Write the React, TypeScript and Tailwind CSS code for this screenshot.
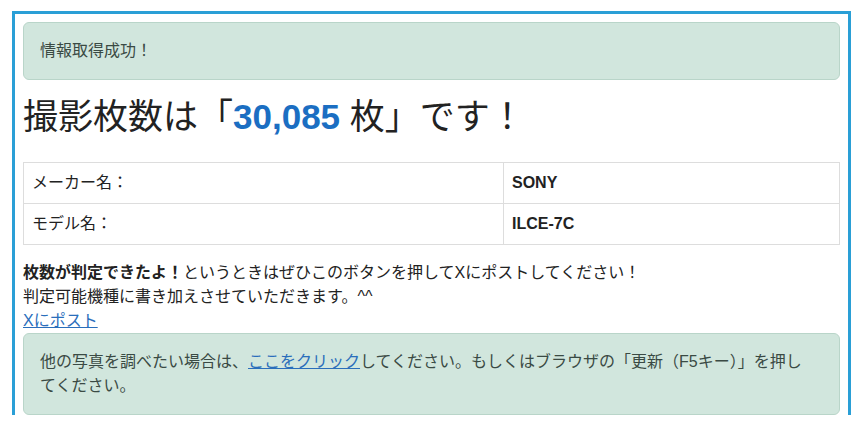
export default function App() {
  const font = 'font-["Liberation_Sans","Noto_Sans_CJK_JP",sans-serif]'

  return (
    <div className={`bg-white pt-[11px] pl-[12px] pr-[2px] ${font} text-[16px] leading-6 text-[#222]`}>
      <div className="border-[3px] border-b-0 border-[#2a9fd6] px-2 pt-2">
        <div className="rounded-md border border-[#b9d5c9] bg-[#d1e6dd] px-4 py-4 text-[#3a4a44]">
          情報取得成功！
        </div>

        <h1 className="mt-[16px] text-[35px] leading-[42px] text-[#222]">
          撮影枚数は「<span className="font-bold text-[#1b6ec2]">30,085</span> 枚」です！
        </h1>

        <table className="mt-[24px] w-full border-collapse">
          <tbody>
            <tr>
              <td className="w-[480px] border border-[#ddd] px-2 py-2">メーカー名：</td>
              <td className="border border-[#ddd] px-2 py-2 font-bold">SONY</td>
            </tr>
            <tr>
              <td className="border border-[#ddd] px-2 py-2">モデル名：</td>
              <td className="border border-[#ddd] px-2 py-2 font-bold">ILCE-7C</td>
            </tr>
          </tbody>
        </table>

        <p className="mt-4">
          <b>枚数が判定できたよ！</b>というときはぜひこのボタンを押してXにポストしてください！
          <br />
          判定可能機種に書き加えさせていただきます。^^
          <br />
          <a href="#" className="text-[#2a6ebb] underline">Xにポスト</a>
        </p>

        <div className="rounded-md border border-[#b9d5c9] bg-[#d1e6dd] py-4 pl-4 pr-6 text-[#3a4a44]">
          他の写真を調べたい場合は、<a href="#" className="text-[#2a6ebb] underline">ここをクリック</a>してください。もしくはブラウザの「更新（F5キー）」を押してください。
        </div>
      </div>
    </div>
  )
}
